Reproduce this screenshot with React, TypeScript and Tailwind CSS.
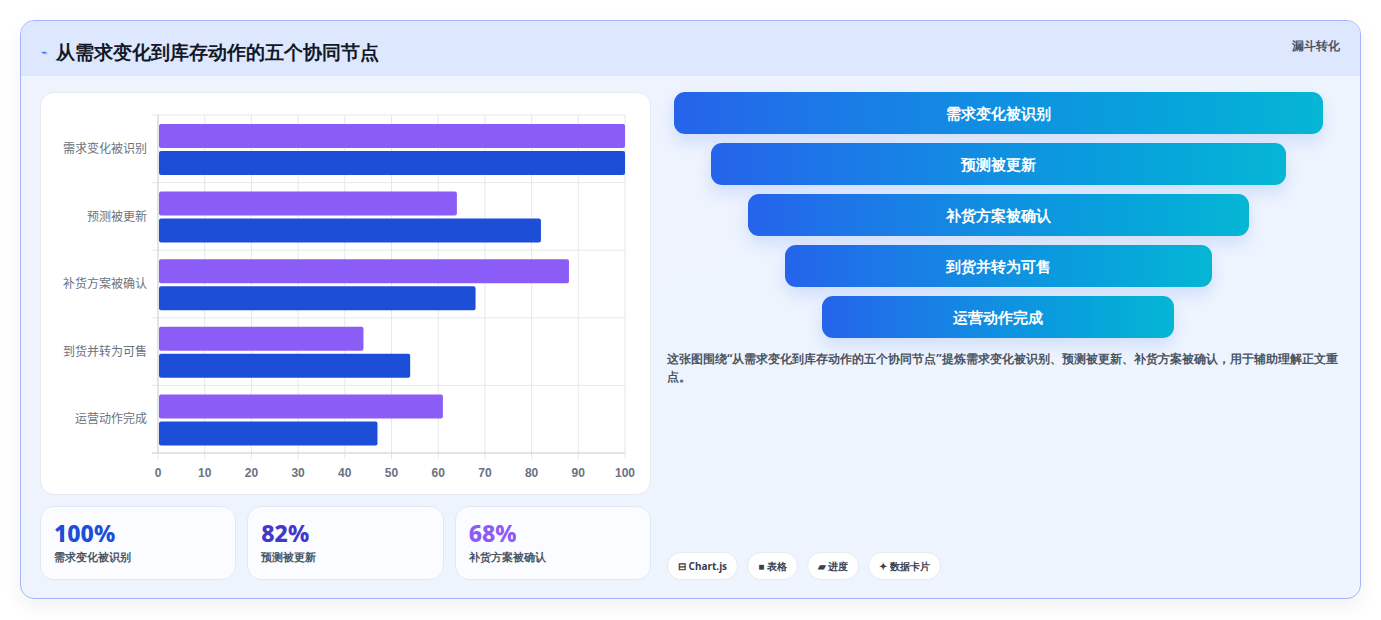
import React from "react";

const cats = ["需求变化被识别", "预测被更新", "补货方案被确认", "到货并转为可售", "运营动作完成"];
const purple = [100, 64, 88, 44, 61];
const blue = [100, 82, 68, 54, 47];

const stats = [
  { v: "100%", label: "需求变化被识别", color: "text-[#1d4ed8]" },
  { v: "82%", label: "预测被更新", color: "text-[#4338ca]" },
  { v: "68%", label: "补货方案被确认", color: "text-[#8b5cf6]" },
];

const funnel = [
  { t: "需求变化被识别", w: "w-[649px]" },
  { t: "预测被更新", w: "w-[575px]" },
  { t: "补货方案被确认", w: "w-[501px]" },
  { t: "到货并转为可售", w: "w-[427px]" },
  { t: "运营动作完成", w: "w-[352px]" },
];

const Chart: React.FC = () => {
  const x0 = 117;
  const x1 = 584;
  const y0 = 22;
  const y1 = 360;
  const sx = (v: number) => x0 + ((x1 - x0) * v) / 100;
  const band = (y1 - y0) / 5;
  return (
    <svg width="610" height="402" className="block">
      {Array.from({ length: 11 }).map((_, i) => (
        <line key={i} x1={sx(i * 10)} x2={sx(i * 10)} y1={y0} y2={y1 + 6} stroke="#e5e7eb" />
      ))}
      {Array.from({ length: 6 }).map((_, i) => (
        <line key={i} x1={x0 - 6} x2={x1} y1={y0 + band * i} y2={y0 + band * i} stroke="#e5e7eb" />
      ))}
      <line x1={x0} x2={x0} y1={y0} y2={y1} stroke="#d1d5db" />
      <line x1={x0 - 6} x2={x1} y1={y1} y2={y1} stroke="#d1d5db" />
      {cats.map((c, i) => {
        const top = y0 + band * i + 9;
        return (
          <g key={c}>
            <rect x={x0 + 1} y={top} width={sx(purple[i]) - x0 - 1} height={24} rx={2} fill="#8b5cf6" />
            <rect x={x0 + 1} y={top + 27} width={sx(blue[i]) - x0 - 1} height={24} rx={2} fill="#1d4ed8" />
            <text x={x0 - 11} y={top + 29} textAnchor="end" fontSize="12" fill="#6b7280" fontFamily="'Noto Sans CJK SC', sans-serif">
              {c}
            </text>
          </g>
        );
      })}
      {Array.from({ length: 11 }).map((_, i) => (
        <text key={i} x={sx(i * 10)} y={y1 + 24} textAnchor="middle" fontSize="12" fontWeight="bold" fill="#6b7280" fontFamily="'Liberation Sans', sans-serif">
          {i * 10}
        </text>
      ))}
    </svg>
  );
};

export default function App() {
  return (
    <div className="w-[1381px] h-[620px] bg-white p-[20px] pb-[21px] font-['Inter','Noto_Sans_CJK_SC',sans-serif]">
      <div className="h-full rounded-[14px] border border-[#a5b4fc] bg-gradient-to-br from-[#eef3fe] to-[#eef5ff] overflow-hidden flex flex-col shadow-[0_8px_20px_rgba(0,0,0,0.06)]">
        <div className="h-[56px] bg-[#dde7fd] flex items-start justify-between px-[20px]">
          <div className="flex items-center gap-[8px] mt-[17px]">
            <span className="text-[#2563eb] text-[11px]">⌁</span>
            <h1 className="text-[19px] font-bold text-[#111827] font-['Noto_Sans_CJK_SC',sans-serif]">从需求变化到库存动作的五个协同节点</h1>
          </div>
          <span className="mt-[16px] text-[12px] font-bold text-[#4b5563]">漏斗转化</span>
        </div>
        <div className="flex-1 flex gap-[16px] px-[19px] pt-[16px] pb-[18px]">
          <div className="w-[611px] flex flex-col gap-[11px]">
            <div className="h-[403px] bg-white rounded-[14px] border border-[#e5eaf3]">
              <Chart />
            </div>
            <div className="grid grid-cols-3 gap-[11px]">
              {stats.map((s) => (
                <div key={s.v} className="h-[74px] rounded-[14px] border border-[#e1e8f5] bg-[#fafcff] px-[13px] pt-[11px]">
                  <div className={`text-[23px] leading-[30px] font-extrabold ${s.color}`}>{s.v}</div>
                  <div className="text-[11px] font-bold text-[#4b5563] mt-[1px]">{s.label}</div>
                </div>
              ))}
            </div>
          </div>
          <div className="flex-1 flex flex-col">
            <div className="flex flex-col items-center gap-[9px] pr-[12px]">
              {funnel.map((f) => (
                <div
                  key={f.t}
                  className={`${f.w} h-[42px] rounded-[11px] bg-gradient-to-r from-[#2563eb] to-[#06b6d4] flex items-center justify-center text-white font-bold text-[15px] shadow-[0_8px_16px_rgba(37,99,235,0.15)]`}
                >
                  {f.t}
                </div>
              ))}
            </div>
            <p className="mt-[12px] text-[12px] leading-[18px] font-bold text-[#4b5563]">
              这张图围绕“从需求变化到库存动作的五个协同节点”提炼需求变化被识别、预测被更新、补货方案被确认，用于辅助理解正文重点。
            </p>
            <div className="mt-auto flex gap-[9px]">
              {["⊟ Chart.js", "■ 表格", "▰ 进度", "✦ 数据卡片"].map((t) => (
                <span key={t} className="h-[28px] px-[10px] rounded-full border border-[#e5eaf3] bg-white text-[10px] font-bold text-[#374151] flex items-center">
                  {t}
                </span>
              ))}
            </div>
          </div>
        </div>
      </div>
    </div>
  );
}
